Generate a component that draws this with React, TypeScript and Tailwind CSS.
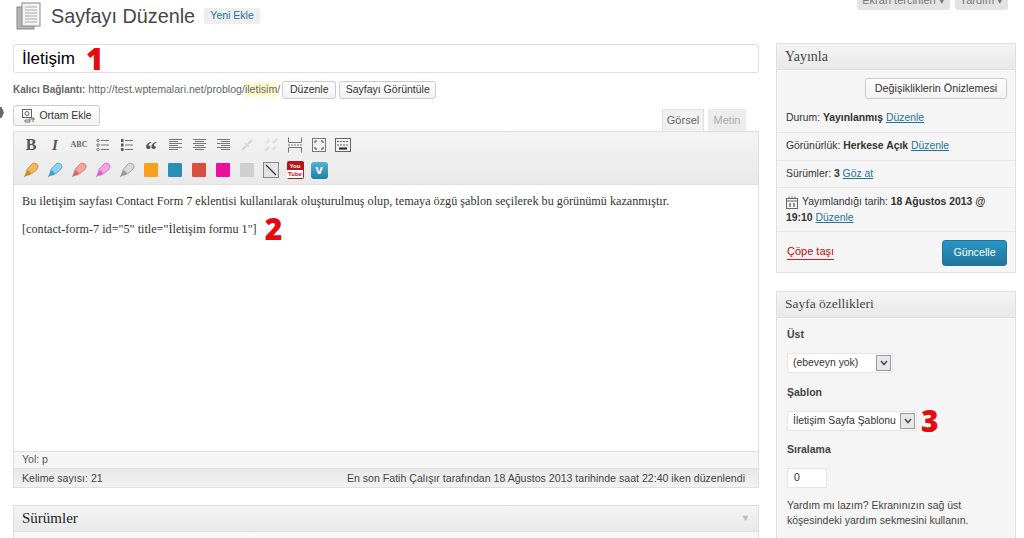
import type { ReactNode } from "react";

const sans = "font-['Liberation_Sans',Arial,sans-serif]";
const serif = "font-['Liberation_Serif',Georgia,serif]";
const marker = "flex h-[20px] items-center font-['Open_Sans',sans-serif] font-extrabold text-[#e6090f] leading-none";

function Btn({ children, className = "" }: { children: ReactNode; className?: string }) {
  return (
    <div
      className={`flex items-center justify-center whitespace-nowrap rounded-[3px] border border-[#ccc] bg-gradient-to-b from-white to-[#f2f2f2] text-[#333] ${className}`}
    >
      {children}
    </div>
  );
}

function Tool({ children }: { children: ReactNode }) {
  return <div className="flex h-[20px] w-[24px] items-center justify-center">{children}</div>;
}

function Lines({ rows }: { rows: [number, number][] }) {
  return (
    <svg width="16" height="14" viewBox="0 0 16 14" stroke="#777" strokeWidth="1">
      {rows.map(([x1, x2], i) => (
        <line key={i} x1={x1} x2={x2} y1={1.5 + i * 2} y2={1.5 + i * 2} />
      ))}
    </svg>
  );
}

function ListIcon({ numbered }: { numbered?: boolean }) {
  return (
    <svg width="14" height="14" viewBox="0 0 14 14">
      <g stroke="#777" strokeWidth="1">
        <line x1="5" x2="13" y1="2.5" y2="2.5" />
        <line x1="5" x2="13" y1="7" y2="7" />
        <line x1="5" x2="13" y1="11.5" y2="11.5" />
      </g>
      {numbered ? (
        <g fill="#555">
          <rect x="1" y="1" width="2.5" height="3" />
          <rect x="1" y="5.5" width="2.5" height="3" />
          <rect x="1" y="10" width="2.5" height="3" />
        </g>
      ) : (
        <g fill="none" stroke="#777">
          <circle cx="2" cy="2.5" r="1.2" />
          <circle cx="2" cy="7" r="1.2" />
          <circle cx="2" cy="11.5" r="1.2" />
        </g>
      )}
    </svg>
  );
}

function Pencil({ body, tip }: { body: string; tip: string }) {
  return (
    <svg width="16" height="16" viewBox="0 0 16 16">
      <path d="M4 7.5 L9.5 1.5 Q12 0 14.5 2.5 Q16 5 14 7 L8.5 12 Z" fill={body} stroke={tip} strokeWidth="0.8" />
      <path d="M4 7.5 L8.5 12 L5.5 13.5 L3 14 L1 15.5 L2 12.5 Z" fill={tip} />
    </svg>
  );
}

function Swatch({ color }: { color: string }) {
  return <div className={`h-[14px] w-[14px] rounded-[1px] ${color}`} />;
}

function Toolbar() {
  return (
    <div className="flex h-[53px] flex-col gap-[5px] border-b border-[#dfdfdf] bg-gradient-to-b from-[#f4f4f4] to-[#e9e9e9] pl-[5px] pt-[3px]">
      <div className="flex">
        <Tool>
          <span className={`${serif} text-[16px] font-bold text-[#555]`}>B</span>
        </Tool>
        <Tool>
          <span className={`${serif} text-[15px] font-bold italic text-[#555]`}>I</span>
        </Tool>
        <Tool>
          <span className={`${serif} text-[8px] font-bold text-[#666]`}>ABC</span>
        </Tool>
        <Tool>
          <ListIcon />
        </Tool>
        <Tool>
          <ListIcon numbered />
        </Tool>
        <Tool>
          <span className={`${serif} mt-[8px] text-[24px] font-bold leading-none text-[#555]`}>“</span>
        </Tool>
        <Tool>
          <Lines rows={[[2, 15], [2, 11], [2, 15], [2, 11], [2, 15], [2, 11]]} />
        </Tool>
        <Tool>
          <Lines rows={[[2, 15], [4, 13], [2, 15], [4, 13], [2, 15], [4, 13]]} />
        </Tool>
        <Tool>
          <Lines rows={[[2, 15], [6, 15], [2, 15], [6, 15], [2, 15], [6, 15]]} />
        </Tool>
        <Tool>
          <svg width="16" height="16" viewBox="0 0 16 16" fill="none" stroke="#d4d4d4" strokeWidth="2.4">
            <path d="M3 13 L7 9 M9 7 L13 3" />
            <path d="M6 6 L10 10" strokeWidth="1.4" />
          </svg>
        </Tool>
        <Tool>
          <svg width="16" height="16" viewBox="0 0 16 16" fill="none" stroke="#dcdcdc" strokeWidth="2.2">
            <path d="M2 14 L6 10 M10 6 L14 2 M3 5 L5 6 M11 10 L13 11 M5 3 L6 5 M10 11 L11 13" />
          </svg>
        </Tool>
        <Tool>
          <svg width="16" height="16" viewBox="0 0 16 16" fill="none" stroke="#777">
            <path d="M1.5 0.5 V5.5 H14.5 V0.5 M1.5 15.5 V10.5 H14.5 V15.5" />
            <path d="M1 8 H15" strokeDasharray="2 1" />
          </svg>
        </Tool>
        <Tool>
          <svg width="14" height="14" viewBox="0 0 14 14" fill="none" stroke="#777">
            <rect x="0.5" y="0.5" width="13" height="13" />
            <path d="M3 5 V3 H5 M9 3 H11 V5 M11 9 V11 H9 M5 11 H3 V9" stroke="#444" />
          </svg>
        </Tool>
        <Tool>
          <svg width="16" height="14" viewBox="0 0 16 14" fill="none" stroke="#666">
            <rect x="0.5" y="0.5" width="15" height="13" />
            <path d="M2 3.5 H14 M2 7 H14" strokeDasharray="2 1" />
            <path d="M4 10.5 H12" stroke="#222" strokeWidth="2" />
          </svg>
        </Tool>
      </div>
      <div className="flex items-center">
        <Tool>
          <Pencil body="#f6b65a" tip="#c98a2c" />
        </Tool>
        <Tool>
          <Pencil body="#8fd3f4" tip="#3f9fcf" />
        </Tool>
        <Tool>
          <Pencil body="#f7a3a3" tip="#d96a6a" />
        </Tool>
        <Tool>
          <Pencil body="#f9a0ea" tip="#dd5fc8" />
        </Tool>
        <Tool>
          <Pencil body="#d8d8d8" tip="#999" />
        </Tool>
        <Tool>
          <Swatch color="bg-[#f9a11f]" />
        </Tool>
        <Tool>
          <Swatch color="bg-[#2b8fb5]" />
        </Tool>
        <Tool>
          <Swatch color="bg-[#d9503f]" />
        </Tool>
        <Tool>
          <Swatch color="bg-[#ec0f9b]" />
        </Tool>
        <Tool>
          <Swatch color="bg-[#cfcfcf]" />
        </Tool>
        <Tool>
          <svg width="16" height="16" viewBox="0 0 16 16">
            <rect x="0.5" y="0.5" width="15" height="15" fill="#e4e4e4" stroke="#888" />
            <path d="M3 3 L13 13" stroke="#333" strokeWidth="1.3" />
          </svg>
        </Tool>
        <Tool>
          <div className="flex h-[18px] w-[17px] flex-col items-center justify-center rounded-[2px] bg-[#b3151b] text-[6px] font-bold leading-[8px] text-white">
            <span>You</span>
            <span className="bg-white px-[1px] text-[#b3151b]">Tube</span>
          </div>
        </Tool>
        <Tool>
          <div className="flex h-[17px] w-[17px] items-center justify-center rounded-[3px] bg-gradient-to-b from-[#4fb3d9] to-[#1f7fa8] text-[13px] font-bold text-white">
            v
          </div>
        </Tool>
      </div>
    </div>
  );
}

function Row({ children, last }: { children: ReactNode; last?: boolean }) {
  return <div className={`px-[9px] text-[10.4px] leading-[16px] text-[#333] ${last ? "" : "border-b border-[#e6e6e6]"}`}>{children}</div>;
}

const link = "text-[#21759b] underline";

function Select({ label, width }: { label: string; width: string }) {
  return (
    <div className={`flex h-[20px] items-center justify-between whitespace-nowrap border border-[#e6e6e6] bg-white pl-[5px] pr-[1px] text-[10.4px] text-[#333] ${width}`}>
      <span>{label}</span>
      <span className="flex h-[16px] w-[15px] items-center justify-center border border-[#999] bg-[#e8e8e8]">
        <svg width="8" height="6" viewBox="0 0 8 6" fill="none" stroke="#445" strokeWidth="1.5">
          <path d="M1 1 L4 4.5 L7 1" />
        </svg>
      </span>
    </div>
  );
}

export default function App() {
  return (
    <div className={`${sans} relative h-[538px] w-[1024px] overflow-hidden bg-white text-[#333]`}>
      {/* screen options tabs, cut by the window top */}
      <div className="flex h-[10px] items-end justify-end gap-[5px] pr-[16px]">
        <div className="flex h-[20px] w-[93px] shrink-0 items-center justify-center rounded-b-[3px] bg-[#e3e3e3] text-[11px] text-[#777]">Ekran tercihleri ▾</div>
        <div className="flex h-[20px] w-[53px] shrink-0 items-center justify-center rounded-b-[3px] bg-[#e3e3e3] text-[11px] text-[#777]">Yardım ▾</div>
      </div>

      {/* collapse arrow */}
      <svg className="absolute left-0 top-[107px]" width="4" height="11" viewBox="0 0 4 11">
        <path d="M0 0 H1.5 L4 5.5 L1.5 11 H0 Z" fill="#666" />
      </svg>

      <div className="flex h-[34px] items-start pl-[16px]">
        <svg className="-mt-[8px]" width="25" height="28" viewBox="0 0 25 28">
          <rect x="1" y="5" width="17" height="22" fill="#b5b5b5" stroke="#888" />
          <rect x="6" y="1" width="18" height="23" fill="#f4f4f4" stroke="#888" />
          <path d="M9 5 H21 M9 8 H21 M9 11 H21 M9 14 H21 M9 17 H21 M9 20 H21" stroke="#aaa" />
        </svg>
        <h1 className="ml-[10px] text-[19.8px] leading-[12px] text-[#464646]">Sayfayı Düzenle</h1>
        <span className="ml-[9px] -mt-[2px] flex h-[16px] w-[56px] items-center justify-center rounded-[3px] bg-[#eee] text-[10.5px] text-[#21759b]">Yeni Ekle</span>
      </div>

      <div className="flex gap-[17px] pl-[13px]">
        {/* main column */}
        <div className="w-[746px]">
          <div className="flex h-[29px] items-center gap-[11px] rounded-[3px] border border-[#dfdfdf] pl-[8px] text-[17px] text-black">
            <span>İletişim</span>
            <span className={`${marker} text-[30px]`}>1</span>
          </div>

          <div className="mt-[7px] flex h-[19px] items-center whitespace-nowrap text-[10.6px] text-[#666]">
            <b className="text-[10px]">Kalıcı Bağlantı:</b>
            <span className="ml-[3px]">http://test.wptemalari.net/problog/</span>
            <span className="bg-[#fffbcc]">iletisim</span>
            <span>/</span>
            <Btn className="ml-[2px] h-[18px] w-[54px] text-[10.5px]">Düzenle</Btn>
            <Btn className="ml-[3px] h-[18px] w-[97px] text-[10.5px]">Sayfayı Görüntüle</Btn>
          </div>

          <div className="relative mt-[6px] flex h-[26px] items-start justify-between">
            <Btn className="h-[21px] w-[87px] gap-[4px] text-[10.4px]">
              <svg width="14" height="14" viewBox="0 0 14 14" fill="none" stroke="#666">
                <rect x="0.5" y="0.5" width="9" height="8" />
                <circle cx="5" cy="4.5" r="2" />
                <path d="M7 10 H13 M11 8 V13 M3 11 H8 V13 H3 Z" strokeWidth="0.9" />
              </svg>
              Ortam Ekle
            </Btn>
            <div className="mr-[13px] mt-[4px] flex items-end gap-[4px] text-[11px]">
              <div className="flex h-[22px] w-[42px] items-center justify-center border border-b-0 border-[#dfdfdf] bg-[#f1f1f1] text-[#666]">Görsel</div>
              <div className="flex h-[22px] w-[38px] items-center justify-center bg-[#ececec] text-[#aaa]">Metin</div>
            </div>
          </div>

          <div className="border border-[#dfdfdf]">
            <Toolbar />
            <div className={`${serif} h-[266px] bg-white pl-[8px] pt-[8px] text-[12.2px] text-[#333]`}>
              <p className="leading-[16px]">
                Bu iletişim sayfası Contact Form 7 eklentisi kullanılarak oluşturulmuş olup, temaya özgü şablon seçilerek bu görünümü kazanmıştır.
              </p>
              <div className="mt-[12px] flex h-[16px] items-center gap-[8px]">
                <span>[contact-form-7 id="5" title="İletişim formu 1"]</span>
                <span className={`${marker} text-[30px]`}>2</span>
              </div>
            </div>
            <div className="flex h-[18px] items-center border-y border-[#dfdfdf] bg-[#f5f5f5] pl-[8px] text-[10.5px] text-[#555]">Yol: p</div>
            <div className="flex h-[18px] items-center justify-between bg-gradient-to-b from-[#e9e9e9] to-[#f2f2f2] pl-[8px] pr-[13px] pt-[1px] text-[10.6px] text-[#444]">
              <span>Kelime sayısı: 21</span>
              <span>En son Fatih Çalışır tarafından 18 Ağustos 2013 tarihinde saat 22:40 iken düzenlendi</span>
            </div>
          </div>

          <div className="mt-[17px] border border-[#dfdfdf]">
            <div className={`${serif} flex h-[26px] items-center justify-between border-b border-[#dfdfdf] bg-gradient-to-b from-[#f4f4f4] to-[#e9e9e9] pl-[8px] pr-[8px] text-[15px] text-[#222]`}>
              <span>Sürümler</span>
              <span className="text-[9px] text-[#bbb]">▼</span>
            </div>
            <div className="h-[20px] bg-[#f8f8f8]" />
          </div>
        </div>

        {/* sidebar */}
        <div className="-mt-px w-[240px]">
          <div className="border border-[#dfdfdf] bg-[#f5f5f5]">
            <div className={`${serif} flex h-[26px] items-center border-b border-[#dfdfdf] bg-gradient-to-b from-[#f4f4f4] to-[#e9e9e9] pl-[8px] text-[14px] text-[#464646]`}>Yayınla</div>
            <div className="flex justify-end pr-[8px] pt-[8px]">
              <Btn className="h-[21px] w-[142px] text-[10.8px]">Değişikliklerin Önizlemesi</Btn>
            </div>
            <div className="mt-[5px]">
              <Row>
                <div className="h-[28px] pt-[6px]">
                  Durum: <b>Yayınlanmış</b> <span className={link}>Düzenle</span>
                </div>
              </Row>
              <Row>
                <div className="h-[27px] pt-[5px]">
                  Görünürlük: <b>Herkese Açık</b> <span className={link}>Düzenle</span>
                </div>
              </Row>
              <Row>
                <div className="h-[26px] pt-[5px]">
                  Sürümler: <b>3</b> <span className={link}>Göz at</span>
                </div>
              </Row>
              <Row>
                <div className="h-[43px] pt-[6px]">
                  <div className="flex items-center">
                    <svg className="mr-[4px]" width="12" height="13" viewBox="0 0 12 13" fill="none" stroke="#666">
                      <rect x="0.5" y="2.5" width="11" height="10" />
                      <path d="M0.5 5 H11.5 M3 0.5 V3 M6 0.5 V3 M9 0.5 V3" />
                      <path d="M4 7 V11 M8 7 V11" stroke="#333" />
                    </svg>
                    <span className="whitespace-pre">
                      Yayımlandığı tarih: <b>18 Ağustos 2013 @</b>
                    </span>
                  </div>
                  <div>
                    <b>19:10</b> <span className={link}>Düzenle</span>
                  </div>
                </div>
              </Row>
            </div>
            <div className="flex h-[40px] items-center justify-between pl-[10px] pr-[8px]">
              <span className="-mt-[1px] border-b border-[#e0102f] text-[11px] text-[#bc0b0b]">Çöpe taşı</span>
              <div className="mt-[1px] flex h-[26px] w-[65px] items-center justify-center rounded-[3px] border border-[#21759b] bg-gradient-to-b from-[#2a95c5] to-[#21759b] text-[10.7px] text-white">Güncelle</div>
            </div>
          </div>

          <div className="mt-[18px] h-[260px] border border-[#dfdfdf] bg-[#f5f5f5]">
            <div className={`${serif} flex h-[26px] items-center border-b border-[#dfdfdf] bg-gradient-to-b from-[#f4f4f4] to-[#e9e9e9] pl-[8px] text-[13.5px] text-[#464646]`}>Sayfa özellikleri</div>
            <div className="pl-[10px] pr-[8px] text-[10.5px]">
              <p className="mt-[9px] h-[14px] font-bold leading-[14px] text-[#444]">Üst</p>
              <div className="mt-[12px]">
                <Select label="(ebeveyn yok)" width="w-[106px]" />
              </div>
              <p className="mt-[12px] h-[14px] font-bold leading-[14px] text-[#444]">Şablon</p>
              <div className="mt-[12px] flex items-center gap-[4px]">
                <Select label="İletişim Sayfa Şablonu" width="w-[130px]" />
                <span className={`${marker} text-[30px]`}>3</span>
              </div>
              <p className="mt-[11px] h-[14px] font-bold leading-[14px] text-[#444]">Sıralama</p>
              <div className="mt-[12px] flex h-[20px] w-[40px] items-center border border-[#e6e6e6] bg-white pl-[6px] text-[10.5px]">0</div>
              <p className="mt-[10px] leading-[15px] text-[#444]">Yardım mı lazım? Ekranınızın sağ üst köşesindeki yardım sekmesini kullanın.</p>
            </div>
          </div>
        </div>
      </div>
    </div>
  );
}
